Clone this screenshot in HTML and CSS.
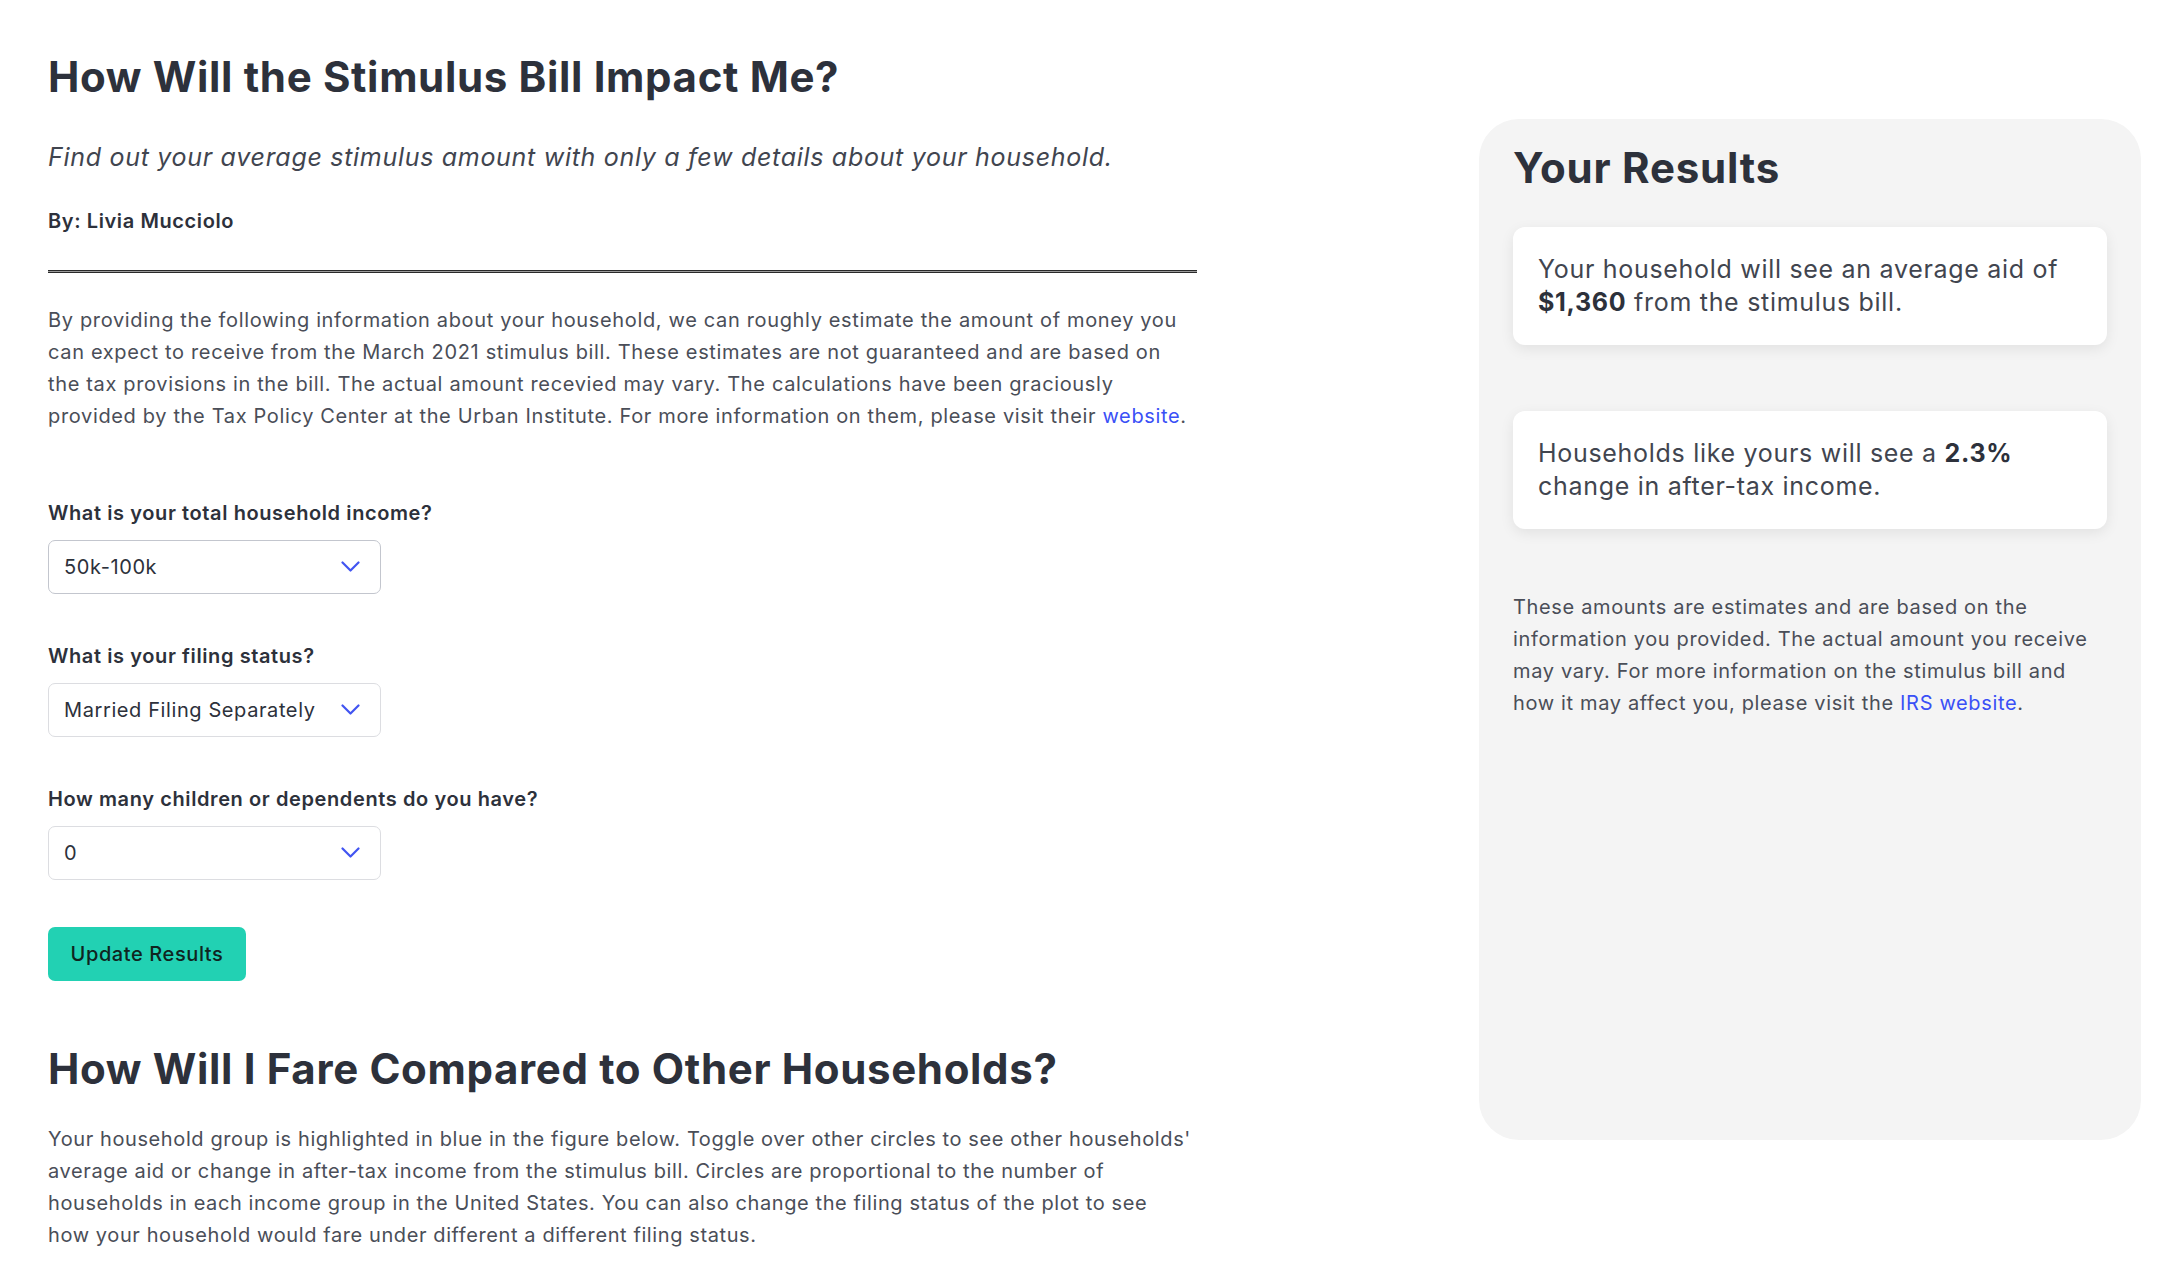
FILE: index.html
```html
<!DOCTYPE html>
<html lang="en">
<head>
<meta charset="utf-8">
<title>How Will the Stimulus Bill Impact Me?</title>
<link rel="stylesheet" href="styles.css">
</head>
<body>
<div class="page">
  <main class="main">
    <h1 class="title">How Will the Stimulus Bill Impact Me?</h1>
    <p class="subtitle">Find out your average stimulus amount with only a few details about your household.</p>
    <p class="byline">By: Livia Mucciolo</p>
    <hr class="rule">
    <p class="body-text intro">By providing the following information about your household, we can roughly estimate the amount of money you can expect to receive from the March 2021 stimulus bill. These estimates are not guaranteed and are based on the tax provisions in the bill. The actual amount recevied may vary. The calculations have been graciously provided by the Tax Policy Center at the Urban Institute. For more information on them, please visit their <a href="#" class="link">website</a>.</p>

    <form class="form">
      <div class="field">
        <label class="label" for="income">What is your total household income?</label>
        <div class="select-wrap">
          <select id="income" class="select select-focus">
            <option>50k-100k</option>
          </select>
          <svg class="chevron" width="19" height="12" viewBox="0 0 19 12"><polyline points="1.5,1.5 9.5,9.5 17.5,1.5" fill="none" stroke="#4154f1" stroke-width="2.2" stroke-linecap="round" stroke-linejoin="round"/></svg>
        </div>
      </div>
      <div class="field">
        <label class="label" for="status">What is your filing status?</label>
        <div class="select-wrap">
          <select id="status" class="select">
            <option>Married Filing Separately</option>
          </select>
          <svg class="chevron" width="19" height="12" viewBox="0 0 19 12"><polyline points="1.5,1.5 9.5,9.5 17.5,1.5" fill="none" stroke="#4154f1" stroke-width="2.2" stroke-linecap="round" stroke-linejoin="round"/></svg>
        </div>
      </div>
      <div class="field">
        <label class="label" for="kids">How many children or dependents do you have?</label>
        <div class="select-wrap">
          <select id="kids" class="select">
            <option>0</option>
          </select>
          <svg class="chevron" width="19" height="12" viewBox="0 0 19 12"><polyline points="1.5,1.5 9.5,9.5 17.5,1.5" fill="none" stroke="#4154f1" stroke-width="2.2" stroke-linecap="round" stroke-linejoin="round"/></svg>
        </div>
      </div>
      <div class="actions">
        <button type="button" class="button">Update Results</button>
      </div>
    </form>

    <h2 class="title section-title">How Will I Fare Compared to Other Households?</h2>
    <p class="body-text outro">Your household group is highlighted in blue in the figure below. Toggle over other circles to see other households' average aid or change in after-tax income from the stimulus bill. Circles are proportional to the number of households in each income group in the United States. You can also change the filing status of the plot to see how your household would fare under different a different filing status.</p>
  </main>

  <aside class="results">
    <h2 class="results-title">Your Results</h2>
    <div class="card">Your household will see an average aid of <strong>$1,360</strong> from the stimulus bill.</div>
    <div class="card card-second">Households like yours will see a <strong>2.3%</strong> change in after-tax income.</div>
    <p class="body-text note">These amounts are estimates and are based on the information you provided. The actual amount you receive may vary. For more information on the stimulus bill and how it may affect you, please visit the <a href="#" class="link">IRS website</a>.</p>
  </aside>
</div>
</body>
</html>
```

FILE: styles.css
```css
* { box-sizing: border-box; }

html, body {
  margin: 0;
  padding: 0;
  background: #ffffff;
}

body {
  font-family: Inter, "Noto Sans", "Liberation Sans", sans-serif;
  color: #2d313b;
  letter-spacing: 0.6px;
}

.page {
  display: flex;
  align-items: flex-start;
  padding: 0 29px 0 48px;
}

.main {
  width: 1149px;
  flex: none;
}

.title {
  margin: 53px 0 0;
  font-size: 42px;
  line-height: 48px;
  font-weight: 700;
  letter-spacing: 0.65px;
  color: #2d313b;
}

.subtitle {
  margin: 38px 0 0;
  font-size: 25px;
  line-height: 36px;
  font-style: italic;
  letter-spacing: 0.7px;
  color: #41454f;
}

.byline {
  margin: 31px 0 0;
  font-size: 20px;
  line-height: 30px;
  font-weight: 600;
  color: #2d313b;
}

.rule {
  margin: 34px 0 0;
  height: 3px;
  border: 1px solid #2a2a2a;
  border-left: 0;
  border-right: 0;
  background: #9a9a9a;
}

.body-text {
  font-size: 20px;
  line-height: 32px;
  letter-spacing: 0.65px;
  color: #4a4e58;
}

.intro {
  max-width: 1148px;
  margin: 31px 0 0;
}

.link {
  color: #3a50f6;
  text-decoration: none;
}

.form {
  margin-top: 66px;
  display: flex;
  flex-direction: column;
  gap: 47px;
}

.field {
  display: flex;
  flex-direction: column;
  gap: 12px;
}

.label {
  font-size: 20px;
  line-height: 30px;
  font-weight: 600;
  color: #2d313b;
}

.select-wrap {
  display: grid;
  width: 333px;
}

.select {
  grid-area: 1 / 1;
  -webkit-appearance: none;
  appearance: none;
  width: 333px;
  height: 54px;
  margin: 0;
  padding: 0 50px 0 15px;
  font-family: inherit;
  font-size: 20px;
  letter-spacing: 0.6px;
  color: #2d313b;
  background: #ffffff;
  border: 1px solid #dcdde1;
  border-radius: 7px;
}

.select-focus {
  border-color: #c3c6ce;
}

.chevron {
  grid-area: 1 / 1;
  justify-self: end;
  align-self: center;
  margin-right: 21px;
  pointer-events: none;
}

.actions {
  display: flex;
}

.button {
  height: 54px;
  width: 198px;
  padding: 0;
  font-family: inherit;
  font-size: 20px;
  font-weight: 500;
  letter-spacing: 0.6px;
  color: #0f2420;
  background: #22d1b3;
  border: 0;
  border-radius: 7px;
}

.section-title {
  margin-top: 64px;
}

.outro {
  max-width: 1143px;
  margin: 30px 0 0;
  letter-spacing: 0.6px;
}

.results {
  flex: none;
  margin-left: auto;
  margin-top: 119px;
  width: 662px;
  height: 1021px;
  padding: 25px 34px 0 34px;
  background: #f4f4f4;
  border-radius: 40px;
}

.results-title {
  margin: 0;
  font-size: 42px;
  line-height: 48px;
  font-weight: 700;
  letter-spacing: 0.8px;
  color: #2d313b;
}

.card {
  margin-top: 35px;
  padding: 26px 25px;
  background: #ffffff;
  border-radius: 12px;
  box-shadow: 0 4px 14px rgba(0, 0, 0, 0.08);
  font-size: 25px;
  line-height: 33px;
  letter-spacing: 0.7px;
  color: #41454f;
}

.card strong {
  font-weight: 700;
  color: #2d313b;
}

.card-second {
  margin-top: 66px;
}

.note {
  margin: 62px 0 0;
}
```
